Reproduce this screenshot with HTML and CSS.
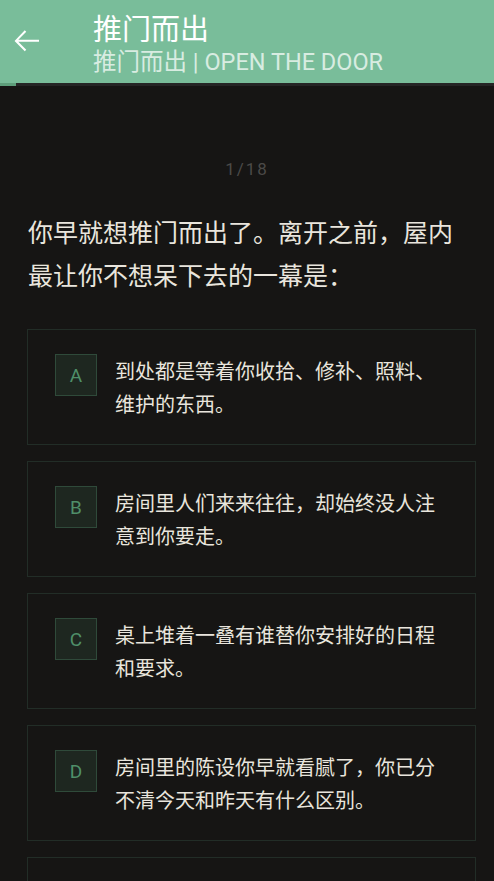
FILE: index.html
```html
<!DOCTYPE html>
<html lang="zh-CN">
<head>
<meta charset="utf-8">
<title>推门而出</title>
<link rel="stylesheet" href="styles.css">
</head>
<body>
<header class="appbar">
  <div class="back">
    <svg width="36" height="36" viewBox="0 0 24 24"><path d="M20 11.1H6.2l5.3-5.3-1-1L3.7 12l6.8 6.8 1-1-5.3-5.3H20z" fill="#fff"/></svg>
  </div>
  <div class="titles">
    <div class="title">推门而出</div>
    <div class="subtitle">推门而出 | OPEN THE DOOR</div>
  </div>
</header>
<div class="progress"><div class="progress-fill" style="width:16px"></div></div>
<main class="content">
  <div class="counter">1/18</div>
  <p class="question">你早就想推门而出了。离开之前，屋内最让你不想呆下去的一幕是：</p>
  <ul class="options">
    <li class="option"><span class="letter">A</span><span class="text">到处都是等着你收拾、修补、照料、维护的东西。</span></li>
    <li class="option"><span class="letter">B</span><span class="text">房间里人们来来往往，却始终没人注意到你要走。</span></li>
    <li class="option"><span class="letter">C</span><span class="text">桌上堆着一叠有谁替你安排好的日程和要求。</span></li>
    <li class="option"><span class="letter">D</span><span class="text">房间里的陈设你早就看腻了，你已分不清今天和昨天有什么区别。</span></li>
    <li class="option"><span class="letter">E</span><span class="text">窗外的世界一直在召唤你，而你还困在这里。</span></li>
  </ul>
</main>
</body>
</html>
```
FILE: styles.css
```css
html, body {
  margin: 0;
  padding: 0;
  background: #161514;
  font-family: Roboto, "Noto Sans CJK SC", sans-serif;
  color: #e9e5dd;
  overflow: hidden;
}
.appbar {
  height: 83px;
  background: #79bd9a;
  display: flex;
  align-items: flex-start;
}
.back {
  width: 93px;
  padding: 23px 0 0 9px;
  box-sizing: border-box;
  display: flex;
}
.titles {
  display: flex;
  flex-direction: column;
  padding-top: 7px;
}
.title {
  font-family: "Noto Sans CJK SC", sans-serif;
  font-size: 29px;
  line-height: 40px;
  color: #ffffff;
}
.subtitle {
  font-family: Roboto, "Noto Sans CJK SC", sans-serif;
  font-size: 23.5px;
  line-height: 30px;
  color: #d8ece1;
}
.progress {
  height: 3px;
  background: #252525;
}
.progress-fill {
  height: 100%;
  background: #5e9e7b;
}
.content {
  padding: 0 28px;
}
.counter {
  text-align: center;
  margin-top: 71px;
  font-size: 17px;
  line-height: 24px;
  letter-spacing: 2px;
  color: #4b4a48;
}
.question {
  margin: 29px 0 33px;
  font-family: "Noto Sans CJK SC", sans-serif;
  font-size: 25px;
  line-height: 43px;
}
.options {
  list-style: none;
  margin: 0;
  padding: 0;
  display: flex;
  flex-direction: column;
  gap: 16px;
}
.option {
  border: 1px solid #222d27;
  padding: 24px 27px;
  display: flex;
  gap: 18px;
  align-items: flex-start;
  margin-right: -10px;
  margin-left: -1px;
}
.letter {
  flex: none;
  width: 40px;
  height: 40px;
  border: 1px solid #2f4a3a;
  background: #1e2720;
  color: #4f8f69;
  font-size: 19px;
  display: flex;
  align-items: center;
  justify-content: center;
}
.text {
  font-family: "Noto Sans CJK SC", sans-serif;
  font-size: 20px;
  line-height: 33px;
}
```
